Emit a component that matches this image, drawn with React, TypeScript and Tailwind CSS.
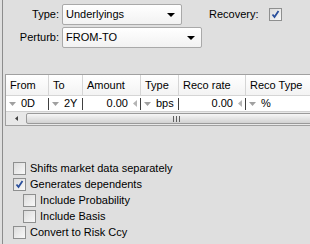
import React from "react";

const font = { fontFamily: '"Liberation Sans", Arial, sans-serif' };

function Caret() {
  return (
    <svg width="8" height="4" viewBox="0 0 8 4" className="shrink-0">
      <path d="M0 0H8L4 4Z" fill="#000" />
    </svg>
  );
}

function Combo({ value, width }: { value: string; width: string }) {
  return (
    <div
      className={`${width} h-[21px] flex items-center justify-between pl-[3px] pr-[6px] rounded-[2px] border border-[#a9a9a9] bg-gradient-to-b from-[#ffffff] to-[#f2f2f2]`}
    >
      <span>{value}</span>
      <Caret />
    </div>
  );
}

function Check({ checked }: { checked?: boolean }) {
  return (
    <div className="w-[13px] h-[13px] border border-[#8e8f8f] bg-gradient-to-br from-[#dcdcdc] to-[#f8f8f8] flex items-center justify-center shrink-0">
      {checked && (
        <svg width="9" height="9" viewBox="0 0 9 9">
          <path d="M1.5 4.5L3.5 7L7.5 1" stroke="#2a4f9c" strokeWidth="1.8" fill="none" />
        </svg>
      )}
    </div>
  );
}

function SmallDown() {
  return (
    <svg width="7" height="4" viewBox="0 0 7 4" className="mr-[5px] shrink-0">
      <path d="M0 0H7L3.5 4Z" fill="#a0a0a0" />
    </svg>
  );
}

function SmallLeft() {
  return (
    <svg width="4" height="7" viewBox="0 0 4 7" className="ml-[5px] shrink-0">
      <path d="M4 0V7L0 3.5Z" fill="#b4b4b4" />
    </svg>
  );
}

const cols = [
  { label: "From", w: "w-[43px]" },
  { label: "To", w: "w-[34px]" },
  { label: "Amount", w: "w-[58px]" },
  { label: "Type", w: "w-[38px]" },
  { label: "Reco rate", w: "w-[67px]" },
  { label: "Reco Type", w: "w-[80px]" },
];

export default function App() {
  return (
    <div className="w-[310px] h-[244px] bg-[#dfdfdf] overflow-hidden text-[11px] text-[#000]" style={font}>
      <div className="ml-[2px] h-full border-l border-[#8c8c8c] flex flex-col">
        {/* Top form */}
        <div className="pt-[4px] flex flex-col gap-[2px]">
          <div className="flex items-center">
            <span className="w-[59px] text-right pr-[3px]">Type:</span>
            <Combo value="Underlyings" width="w-[120px]" />
            <span className="ml-[27px]">Recovery:</span>
            <div className="ml-[10px]">
              <Check checked />
            </div>
          </div>
          <div className="flex items-center">
            <span className="w-[59px] text-right pr-[3px]">Perturb:</span>
            <Combo value="FROM-TO" width="w-[140px]" />
          </div>
        </div>

        {/* Table */}
        <div className="mt-[26px] ml-[2px] border border-[#a0a0a0] border-r-0 bg-white w-[320px]">
          <div className="flex h-[21px] bg-gradient-to-b from-[#ffffff] to-[#f3f3f3] border-b border-[#d5d5d5]">
            {cols.map((c) => (
              <div key={c.label} className={`${c.w} shrink-0 flex items-center pl-[4px] border-r border-[#d5d5d5]`}>
                {c.label}
              </div>
            ))}
          </div>
          <div className="flex h-[15px] items-center">
            <div className="w-[43px] shrink-0 flex items-center pl-[3px] border-r border-[#404040] h-[12px]">
              <SmallDown />0D
            </div>
            <div className="w-[34px] shrink-0 flex items-center pl-[3px] border-r border-[#404040] h-[12px]">
              <SmallDown />2Y
            </div>
            <div className="w-[58px] shrink-0 flex items-center justify-end pr-[3px] border-r border-[#404040] h-[12px]">
              0.00<SmallLeft />
            </div>
            <div className="w-[38px] shrink-0 flex items-center pl-[3px] border-r border-[#404040] h-[12px]">
              <SmallDown />bps
            </div>
            <div className="w-[67px] shrink-0 flex items-center justify-end pr-[3px] border-r border-[#404040] h-[12px]">
              0.00<SmallLeft />
            </div>
            <div className="w-[80px] shrink-0 flex items-center pl-[3px] h-[12px]">
              <SmallDown />%
            </div>
          </div>
          {/* Horizontal scrollbar */}
          <div className="flex h-[14px] bg-[#e8e8e8] border-t border-[#d0d0d0]">
            <div className="w-[20px] flex items-center justify-center">
              <svg width="3" height="5" viewBox="0 0 3 5">
                <path d="M3 0V5L0 2.5Z" fill="#404040" />
              </svg>
            </div>
            <div className="flex-1 my-[1px] rounded-[2px] border border-[#9a9a9a] bg-gradient-to-b from-[#f6f6f6] to-[#d2d2d2] flex items-center pl-[146px]">
              <svg width="7" height="6" viewBox="0 0 7 6">
                <path d="M0.5 0V6M3.5 0V6M6.5 0V6" stroke="#606060" strokeWidth="1" />
              </svg>
            </div>
          </div>
        </div>

        {/* Options */}
        <div className="mt-[35px] ml-[10px] flex flex-col gap-[2px]">
          <label className="flex items-center gap-[4px] h-[14px]">
            <Check />Shifts market data separately
          </label>
          <label className="flex items-center gap-[4px] h-[14px]">
            <Check checked />Generates dependents
          </label>
          <label className="flex items-center gap-[4px] h-[14px] ml-[10px]">
            <Check />Include Probability
          </label>
          <label className="flex items-center gap-[4px] h-[14px] ml-[10px]">
            <Check />Include Basis
          </label>
          <label className="flex items-center gap-[4px] h-[14px]">
            <Check />Convert to Risk Ccy
          </label>
        </div>
      </div>
    </div>
  );
}
